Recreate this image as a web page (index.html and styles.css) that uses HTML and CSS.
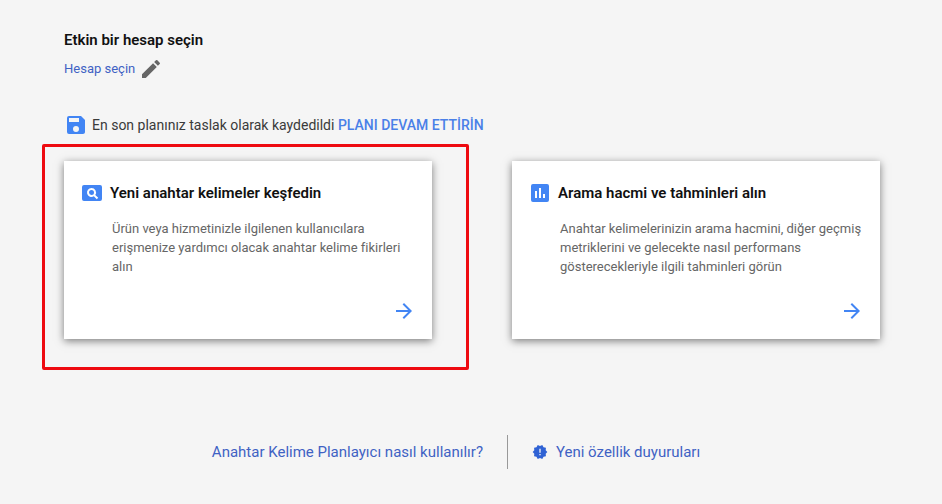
FILE: index.html
```html
<!DOCTYPE html>
<html lang="tr">
<head>
<meta charset="utf-8">
<meta name="viewport" content="width=device-width, initial-scale=1">
<title>Anahtar Kelime Planlayıcı</title>
<link rel="stylesheet" href="styles.css">
</head>
<body>
<main class="page">
  <section class="account">
    <h1 class="heading">Etkin bir hesap seçin</h1>
    <button type="button" class="account-button">
      <span>Hesap seçin</span>
      <svg class="icon icon-edit" viewBox="0 0 24 24" aria-hidden="true"><path d="M3 17.25V21h3.750L17.810 9.940l-3.750-3.750L3 17.250zM20.710 7.040a1 1 0 0 0 0-1.410l-2.340-2.340a1 1 0 0 0-1.410 0l-1.830 1.830 3.750 3.750 1.830-1.830z"/></svg>
    </button>
  </section>

  <p class="draft">
    <svg class="icon" viewBox="0 0 24 24" aria-hidden="true"><path d="M17 3H5a2 2 0 0 0-2 2v14a2 2 0 0 0 2 2h14c1.100 0 2-.9 2-2V7l-4-4zm-5 16a3 3 0 1 1 0-6 3 3 0 0 1 0 6zm3-10H5V5h10v4z"/></svg>
    <span>En son planınız taslak olarak kaydedildi <a class="resume" href="#plan">PLANI DEVAM ETTİRİN</a></span>
  </p>

  <div class="cards">
    <article class="card marked">
      <h2 class="heading card-title">
        <svg class="icon" viewBox="0 0 24 24" aria-hidden="true"><path fill-rule="evenodd" d="M4 4h16a2 2 0 0 1 2 2v12a2 2 0 0 1-2 2H4a2 2 0 0 1-2-2V6a2 2 0 0 1 2-2zM11.500 7a4.500 4.500 0 1 0 2.380 8.320L16.790 18.210l1.420-1.420-2.890-2.890A4.500 4.500 0 0 0 11.500 7zm0 2a2.500 2.500 0 1 1 0 5 2.500 2.500 0 0 1 0-5z"/></svg>
        Yeni anahtar kelimeler keşfedin
      </h2>
      <p class="card-text">Ürün veya hizmetinizle ilgilenen kullanıcılara erişmenize yardımcı olacak anahtar kelime fikirleri alın</p>
      <a class="card-go" href="#discover" aria-label="Yeni anahtar kelimeler keşfedin">
        <svg class="icon" viewBox="0 0 24 24" aria-hidden="true"><path d="M12 4l-1.410 1.410L16.170 11H4v2h12.170l-5.580 5.590L12 20l8-8z"/></svg>
      </a>
    </article>
    <article class="card">
      <h2 class="heading card-title">
        <svg class="icon" viewBox="0 0 24 24" aria-hidden="true"><path d="M19 3H5a2 2 0 0 0-2 2v14a2 2 0 0 0 2 2h14a2 2 0 0 0 2-2V5a2 2 0 0 0-2-2zM9 17H7v-7h2v7zm4 0h-2V7h2v10zm4 0h-2v-4h2v4z"/></svg>
        Arama hacmi ve tahminleri alın
      </h2>
      <p class="card-text">Anahtar kelimelerinizin arama hacmini, diğer geçmiş metriklerini ve gelecekte nasıl performans gösterecekleriyle ilgili tahminleri görün</p>
      <a class="card-go" href="#forecast" aria-label="Arama hacmi ve tahminleri alın">
        <svg class="icon" viewBox="0 0 24 24" aria-hidden="true"><path d="M12 4l-1.410 1.410L16.170 11H4v2h12.170l-5.580 5.590L12 20l8-8z"/></svg>
      </a>
    </article>
  </div>

  <footer class="links">
    <a class="link link-help" href="#help">Anahtar Kelime Planlayıcı nasıl kullanılır?</a>
    <a class="link link-news" href="#news">
      <svg class="icon icon-news" viewBox="0 0 24 24" aria-hidden="true"><path d="M23 12l-2.440-2.780.340-3.680-3.610-.820-1.890-3.180L12 3 8.600 1.540 6.710 4.720l-3.610.810.340 3.680L1 12l2.440 2.780-.340 3.690 3.610.820 1.890 3.180L12 21l3.400 1.460 1.890-3.180 3.610-.820-.340-3.680L23 12zm-10 5h-2v-2h2v2zm0-4h-2V7h2v6z"/></svg>
      Yeni özellik duyuruları
    </a>
  </footer>
</main>
</body>
</html>
```
FILE: styles.css
```css
* {
  box-sizing: border-box;
}

body {
  margin: 0;
  background: #f5f5f5;
  color: #3a3a3a;
  font-family: Roboto, "Liberation Sans", sans-serif;
}

.page {
  padding: 30px 62px 32px 64px;
}

.heading {
  margin: 0;
  color: #111;
  font-size: 15px;
  line-height: 20px;
  font-weight: 600;
}

.icon {
  flex: none;
  width: 24px;
  height: 24px;
  fill: #4285f4;
}

.account-button {
  display: flex;
  align-items: center;
  gap: 4px;
  margin-top: 7px;
  padding: 0;
  border: 0;
  background: none;
  color: #3f62c4;
  font: 400 13px/20px Roboto, "Liberation Sans", sans-serif;
  cursor: pointer;
}

.icon-edit {
  fill: #666;
}

.draft {
  display: flex;
  align-items: center;
  gap: 4px;
  margin: 32px 0 24px;
  font-size: 14px;
  line-height: 20px;
}

.resume {
  color: #4a80e8;
  font-weight: 500;
  text-decoration: none;
}

.cards {
  display: grid;
  grid-template-columns: 1fr 1fr;
  gap: 80px;
}

.card {
  position: relative;
  display: flex;
  flex-direction: column;
  padding: 20px 16px 16px;
  background: #fff;
  box-shadow: 0 2px 8px rgba(0, 0, 0, 0.5);
}

/* Highlight frame drawn around the card */
.marked::after {
  content: "";
  position: absolute;
  inset: -17px -37px -31px -22px;
  border: 3px solid #ee0a10;
  border-radius: 2px;
  pointer-events: none;
}

.card-title {
  display: flex;
  align-items: center;
  gap: 6px;
}

.card-text {
  margin: 14px 0 23px 32px;
  color: #666;
  font-size: 13px;
  line-height: 19px;
}

.card-go {
  align-self: flex-end;
  display: flex;
}

.links {
  display: flex;
  justify-content: center;
  margin-top: 96px;
  padding-right: 32px;
}

.link {
  display: flex;
  align-items: center;
  height: 34px;
  color: #3f62c4;
  font-size: 15px;
  line-height: 20px;
  text-decoration: none;
}

.link-help {
  padding-right: 24px;
  border-right: 1px solid #999;
}

.link-news {
  gap: 8px;
  padding-left: 24px;
}

.icon-news {
  width: 16px;
  height: 16px;
  fill: #2f62d4;
}
```
